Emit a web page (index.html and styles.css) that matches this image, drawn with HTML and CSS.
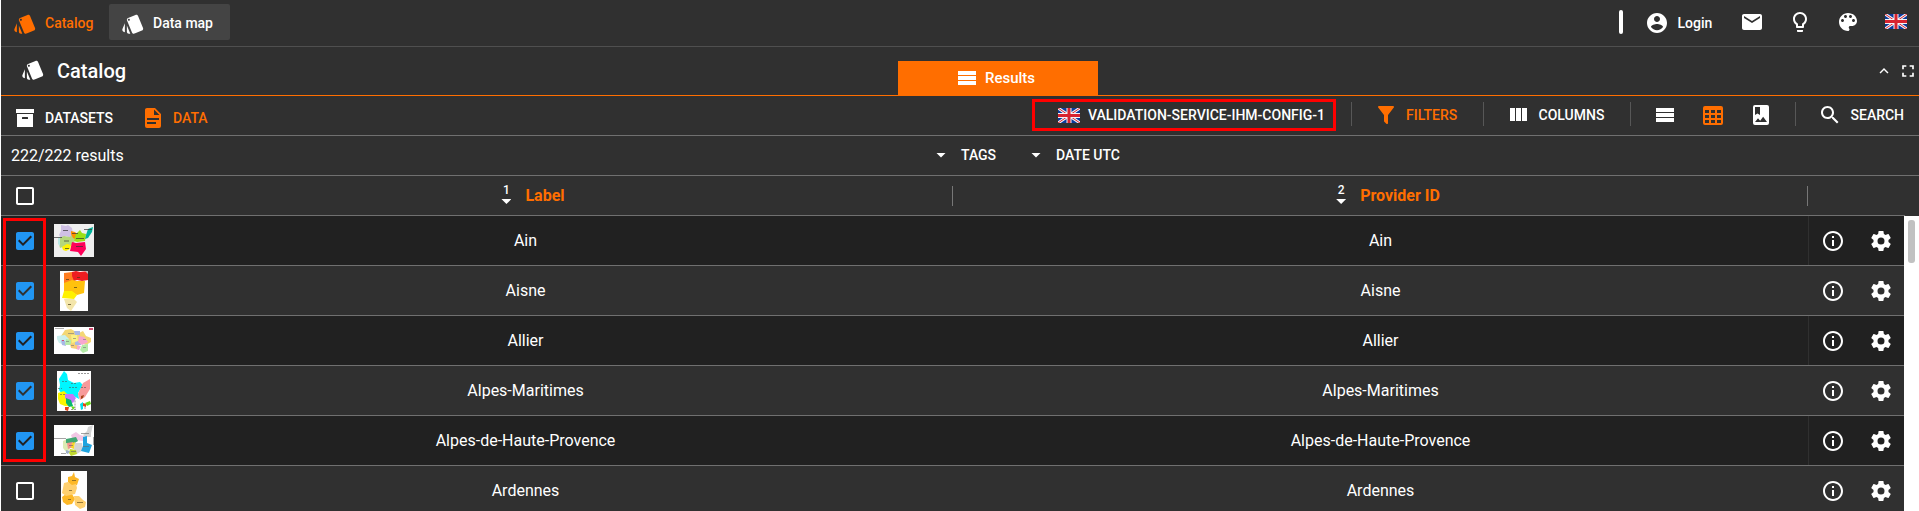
FILE: index.html
```html
<!DOCTYPE html>
<html lang="en">
<head>
<meta charset="utf-8">
<title>Catalog</title>
<link rel="stylesheet" href="styles.css">
</head>
<body>
<svg class="sprite" aria-hidden="true">
  <symbol id="cards" viewBox="0 0 24 24"><path d="M2.53 19.65l1.34.56v-9.03l-2.43 5.86c-.41 1.02.08 2.19 1.09 2.61zm19.5-3.7L17.07 3.98c-.31-.75-1.04-1.21-1.81-1.23-.26 0-.53.04-.79.15L7.1 5.95c-.75.31-1.21 1.03-1.23 1.8-.01.27.04.54.15.8l4.96 11.97c.31.76 1.05 1.22 1.83 1.23.26 0 .52-.05.77-.15l7.36-3.05c1.02-.42 1.51-1.59 1.09-2.6zM7.88 8.75c-.55 0-1-.45-1-1s.45-1 1-1 1 .45 1 1-.45 1-1 1zm-2 11c0 1.1.9 2 2 2h1.45l-3.45-8.34v6.34z"/></symbol>
  <symbol id="archive" viewBox="0 0 24 24"><path d="M3 3h18v4H3V3m1 5h16v13H4V8m5.500 3a.5.5 0 0 0-.5.5V13h6v-1.500a.5.5 0 0 0-.5-.5h-5z"/></symbol>
  <symbol id="doc" viewBox="0 0 24 24"><path d="M13 9h5.500L13 3.500V9M6 2h8l6 6v12a2 2 0 0 1-2 2H6a2 2 0 0 1-2-2V4c0-1.110.89-2 2-2m9 16v-2H6v2h9m3-4v-2H6v2h12z"/></symbol>
  <symbol id="bars" viewBox="0 0 24 24"><path d="M3 5h18v4H3zM3 10h18v4H3zM3 15h18v4H3z"/></symbol>
  <symbol id="filter" viewBox="0 0 24 24"><path d="M14 12v7.880c.04.3-.06.62-.29.83a.996.996 0 0 1-1.410 0l-2.010-2.010a.989.989 0 0 1-.29-.83V12h-.03L4.210 4.620a1 1 0 0 1 .17-1.400c.19-.14.4-.22.62-.22h14c.22 0 .43.08.62.22a1 1 0 0 1 .17 1.400L14.030 12H14z"/></symbol>
  <symbol id="columns" viewBox="0 0 24 24"><path d="M4 5h5v13H4zM10 5h5v13h-5zM16 5h5v13h-5z"/></symbol>
  <symbol id="table" viewBox="0 0 24 24"><path d="M4,3H20A2,2 0 0,1 22,5V20A2,2 0 0,1 20,22H4A2,2 0 0,1 2,20V5A2,2 0 0,1 4,3M4,7V10H8V7H4M10,7V10H14V7H10M20,10V7H16V10H20M4,12V15H8V12H4M4,20H8V17H4V20M10,12V15H14V12H10M10,20H14V17H10V20M20,20V17H16V20H20M20,12H16V15H20V12Z"/></symbol>
  <symbol id="album" viewBox="0 0 24 24"><path d="M6,19L9,15.14L11.14,17.72L14.14,13.86L18,19H6M6,4H11V12L8.5,10.5L6,12M18,2H6A2,2 0 0,0 4,4V20A2,2 0 0,0 6,22H18A2,2 0 0,0 20,20V4A2,2 0 0,0 18,2Z"/></symbol>
  <symbol id="search" viewBox="0 0 24 24"><path d="M15.5 14h-.79l-.28-.27C15.41 12.59 16 11.11 16 9.5 16 5.91 13.09 3 9.5 3S3 5.91 3 9.5 5.91 16 9.5 16c1.61 0 3.09-.59 4.23-1.57l.27.28v.79l5 4.99L20.49 19l-4.99-5zm-6 0C7.01 14 5 11.99 5 9.5S7.01 5 9.5 5 14 7.010 14 9.5 11.990 14 9.5 14z"/></symbol>
  <symbol id="account" viewBox="0 0 24 24"><path d="M12 2C6.48 2 2 6.48 2 12s4.48 10 10 10 10-4.480 10-10S17.520 2 12 2zm0 3c1.660 0 3 1.340 3 3s-1.340 3-3 3-3-1.340-3-3 1.340-3 3-3zm0 14.200c-2.500 0-4.710-1.280-6-3.220.03-1.990 4-3.080 6-3.080 1.990 0 5.970 1.090 6 3.080-1.290 1.940-3.500 3.220-6 3.220z"/></symbol>
  <symbol id="mail" viewBox="0 0 24 24"><path d="M20 4H4c-1.100 0-1.990.9-1.990 2L2 18c0 1.100.9 2 2 2h16c1.100 0 2-.9 2-2V6c0-1.100-.9-2-2-2zm0 4l-8 5-8-5V6l8 5 8-5v2z"/></symbol>
  <symbol id="bulb" viewBox="0 0 24 24"><path d="M9 21c0 .55.45 1 1 1h4c.55 0 1-.45 1-1v-1H9v1zm3-19C8.140 2 5 5.140 5 9c0 2.380 1.190 4.470 3 5.740V17c0 .55.45 1 1 1h6c.55 0 1-.45 1-1v-2.260c1.810-1.270 3-3.360 3-5.740 0-3.860-3.140-7-7-7zm2.850 11.100l-.85.6V16h-4v-2.300l-.85-.6C7.800 12.160 7 10.630 7 9c0-2.760 2.240-5 5-5s5 2.240 5 5c0 1.630-.8 3.160-2.150 4.100z"/></symbol>
  <symbol id="palette" viewBox="0 0 24 24"><path d="M12 3c-4.970 0-9 4.030-9 9s4.030 9 9 9c.83 0 1.500-.67 1.500-1.500 0-.39-.15-.74-.39-1.010-.23-.26-.38-.61-.38-.99 0-.83.67-1.500 1.500-1.500H16c2.760 0 5-2.240 5-5 0-4.420-4.030-8-9-8zm-5.500 9c-.83 0-1.500-.67-1.500-1.500S5.670 9 6.500 9 8 9.670 8 10.500 7.330 12 6.500 12zm3-4C8.670 8 8 7.330 8 6.500S8.670 5 9.500 5s1.500.67 1.500 1.500S10.330 8 9.500 8zm5 0c-.83 0-1.500-.67-1.500-1.500S13.670 5 14.500 5s1.500.67 1.500 1.500S15.330 8 14.500 8zm3 4c-.83 0-1.500-.67-1.500-1.500S16.670 9 17.500 9s1.500.67 1.500 1.500-.67 1.500-1.500 1.500z"/></symbol>
  <symbol id="up" viewBox="0 0 24 24"><path d="M12 8l-6 6 1.410 1.410L12 10.830l4.590 4.580L18 14z"/></symbol>
  <symbol id="full" viewBox="0 0 24 24"><path d="M7 14H5v5h5v-2H7v-3zm-2-4h2V7h3V5H5v5zm12 7h-3v2h5v-5h-2v3zM14 5v2h3v3h2V5h-5z"/></symbol>
  <symbol id="info" viewBox="0 0 24 24"><path d="M11 17h2v-6h-2v6zm1-15C6.480 2 2 6.480 2 12s4.480 10 10 10 10-4.480 10-10S17.520 2 12 2zm0 18c-4.410 0-8-3.590-8-8s3.590-8 8-8 8 3.590 8 8-3.590 8-8 8zM11 9h2V7h-2v2z"/></symbol>
  <symbol id="gear" viewBox="0 0 24 24"><path d="M12,15.5A3.5,3.5 0 0,1 8.5,12A3.5,3.5 0 0,1 12,8.5A3.5,3.5 0 0,1 15.5,12A3.5,3.5 0 0,1 12,15.5M19.43,12.97C19.47,12.65 19.5,12.33 19.5,12C19.5,11.67 19.47,11.34 19.43,11L21.54,9.37C21.73,9.22 21.78,8.95 21.66,8.73L19.66,5.27C19.54,5.05 19.27,4.96 19.05,5.05L16.56,6.05C16.04,5.66 15.5,5.32 14.87,5.07L14.5,2.42C14.46,2.18 14.25,2 14,2H10C9.75,2 9.54,2.18 9.5,2.42L9.13,5.07C8.5,5.32 7.96,5.66 7.44,6.05L4.95,5.05C4.73,4.96 4.46,5.05 4.34,5.27L2.34,8.73C2.21,8.95 2.27,9.22 2.46,9.37L4.57,11C4.53,11.34 4.5,11.67 4.5,12C4.5,12.33 4.53,12.65 4.57,12.97L2.46,14.63C2.27,14.78 2.21,15.05 2.34,15.27L4.34,18.73C4.46,18.95 4.73,19.03 4.95,18.95L7.44,17.94C7.96,18.34 8.5,18.68 9.13,18.93L9.5,21.58C9.54,21.82 9.75,22 10,22H14C14.25,22 14.46,21.82 14.5,21.58L14.87,18.93C15.5,18.67 16.04,18.34 16.56,17.94L19.05,18.95C19.27,19.03 19.54,18.95 19.66,18.73L21.66,15.27C21.78,15.05 21.73,14.78 21.54,14.63L19.43,12.97Z"/></symbol>
  <symbol id="box" viewBox="0 0 24 24"><path d="M19 5v14H5V5h14m0-2H5c-1.100 0-2 .9-2 2v14c0 1.100.9 2 2 2h14c1.100 0 2-.9 2-2V5c0-1.100-.9-2-2-2z"/></symbol>
  <symbol id="checked" viewBox="0 0 24 24"><path d="M19 3H5c-1.110 0-2 .9-2 2v14c0 1.100.89 2 2 2h14c1.110 0 2-.9 2-2V5c0-1.100-.89-2-2-2zm-9 14l-5-5 1.410-1.410L10 14.170l7.590-7.590L19 8l-9 9z"/></symbol>
  <symbol id="flag" viewBox="0 0 22 15"><path fill="#0b3a9b" d="M0 0h22v15H0z"/><path stroke="#f4f4f8" stroke-width="3" d="M0 0l22 15M22 0L0 15"/><path stroke="#d8232f" stroke-width="1" d="M0 0l22 15M22 0L0 15"/><path fill="#f4f4f8" d="M8.500 0h5v15h-5zM0 5h22v5H0z"/><path fill="#d8232f" d="M9.500 0h3v15h-3zM0 6h22v3H0z"/></symbol>
</svg>

<div class="app">
  <header class="topbar">
    <a class="nav nav-active"><svg class="icon"><use href="#cards"/></svg><span>Catalog</span></a>
    <a class="nav nav-raised"><svg class="icon"><use href="#cards"/></svg><span>Data map</span></a>
    <div class="top-tools">
      <i class="grip"></i>
      <a class="login"><svg class="icon"><use href="#account"/></svg><span>Login</span></a>
      <svg class="icon"><use href="#mail"/></svg>
      <svg class="icon"><use href="#bulb"/></svg>
      <svg class="icon"><use href="#palette"/></svg>
      <svg class="flag"><use href="#flag"/></svg>
    </div>
  </header>

  <div class="titlebar">
    <svg class="icon"><use href="#cards"/></svg>
    <h1 class="title">Catalog</h1>
    <div class="tab"><svg class="icon"><use href="#bars"/></svg><span>Results</span></div>
    <div class="window-tools">
      <svg class="icon-up"><use href="#up"/></svg>
      <svg class="icon-full"><use href="#full"/></svg>
    </div>
  </div>

  <div class="toolbar">
    <div class="modes">
      <a class="mode"><svg class="icon"><use href="#archive"/></svg><span>DATASETS</span></a>
      <a class="mode accent"><svg class="icon"><use href="#doc"/></svg><span>DATA</span></a>
    </div>
    <div class="options">
      <div class="service"><svg class="flag"><use href="#flag"/></svg><span>VALIDATION-SERVICE-IHM-CONFIG-1</span></div>
      <i class="sep sep-first"></i>
      <a class="opt opt-filters accent"><svg class="icon"><use href="#filter"/></svg><span>FILTERS</span></a>
      <i class="sep"></i>
      <a class="opt opt-columns"><svg class="icon"><use href="#columns"/></svg><span>COLUMNS</span></a>
      <i class="sep"></i>
      <div class="views">
        <svg class="icon"><use href="#bars"/></svg>
        <svg class="icon accent"><use href="#table"/></svg>
        <svg class="icon"><use href="#album"/></svg>
      </div>
      <i class="sep"></i>
      <a class="opt opt-search"><svg class="icon"><use href="#search"/></svg><span>SEARCH</span></a>
    </div>
  </div>

  <div class="summary">
    <span class="count">222/222 results</span>
    <span class="drop drop-tags"><i class="caret"></i>TAGS</span>
    <span class="drop drop-date"><i class="caret"></i>DATE UTC</span>
  </div>

  <div class="grid head">
    <div class="cell-check"><svg class="icon"><use href="#box"/></svg></div>
    <div></div>
    <div class="cell-head"><span class="order"><b>1</b><i class="caret"></i></span><span class="head-name">Label</span></div>
    <div class="cell-head"><span class="order"><b>2</b><i class="caret"></i></span><span class="head-name">Provider ID</span></div>
  </div>

  <div class="body">
    <div class="rows">
      <div class="grid row">
        <div class="cell-check on"><svg class="icon"><use href="#checked"/></svg></div>
        <div class="cell-thumb"><svg width="40" height="33"><path fill="#efefef" d="M0 0h40v33H0z"/><path fill="#cfc0e4" d="M7 1l5 1 2-1 4 3 1 6-2 4-5-2-5 2-2-3 2-4z"/><path fill="#b5d77c" d="M5 14l5-2 6 1 3-4 2 5-1 6-4 2-2-1-8 3-1-4z"/><path fill="#b9e8e4" d="M4 14l2-1v9l-2-2z"/><path fill="#ff9000" d="M17 7l4 1 2 2-2 5-2-1-2-4z"/><path fill="#9be016" d="M22 10l4-4 2 3 4 1-1 7-8 1-3-1z"/><path fill="#00b39b" d="M32 11l2-6 5-2-1 5-4 6-3 1z"/><path fill="#ff0058" d="M18 18l4 1 9-1 1 7-5 7-3-4-8-1z"/><path fill="#fff200" d="M8 23l5-3 4 1-1 4-4 2-3-1z"/><path stroke="#333" stroke-width=".7" d="M9 6.500h5M18 9.500h6M22 14.500h8M10 17h5M11 24.500h4M22 22.500h7M30 5.500h8M0 13.500h8"/></svg></div>
        <div class="cell-text">Ain</div><div class="cell-text">Ain</div>
        <div class="cell-actions"><svg class="icon"><use href="#info"/></svg><svg class="icon"><use href="#gear"/></svg></div>
      </div>
      <div class="grid row">
        <div class="cell-check on"><svg class="icon"><use href="#checked"/></svg></div>
        <div class="cell-thumb"><svg width="28" height="40"><path fill="#fff" d="M0 0h28v40H0z"/><path fill="#ff7d20" d="M4 2l8-1 2 3v6l-4 3-6-1z"/><path fill="#ed1d21" d="M12 1l4-1 4 1 8-1v9l-6 1-5-1-3 1-2-5z"/><path fill="#ffc20e" d="M4 12l8-3 5 1 8 0-1 12-7 2-5-3-8-1z"/><path fill="#fff100" d="M4 20l8 0 5 4-3 4-12-1z"/><path fill="#f3e5aa" d="M4 28l10 0 3 3-6 9-4-3z"/><path fill="#bbb" d="M25 0h3v3z"/><path stroke="#4a3b18" stroke-width=".7" d="M14 16.500h3M6 8.500h3M17 6.500h3M8 33.500h3"/></svg></div>
        <div class="cell-text">Aisne</div><div class="cell-text">Aisne</div>
        <div class="cell-actions"><svg class="icon"><use href="#info"/></svg><svg class="icon"><use href="#gear"/></svg></div>
      </div>
      <div class="grid row">
        <div class="cell-check on"><svg class="icon"><use href="#checked"/></svg></div>
        <div class="cell-thumb"><svg width="40" height="27"><path fill="#fff" d="M0 0h40v27H0z"/><path fill="#f4d775" d="M11 3l6-1 5 3 3 1 4-2 3 5 5 2v4l-5 3-5-2-4 4-5-1-6-6-5-4z"/><path fill="#c9efee" d="M3 9l8-1 4 4-3 6-7-2-2-4z"/><path fill="#a9b8e6" d="M20 4h6v4h-5zM7 13l4 1 1 5-4-1zM21 14h6v4h-6z"/><path fill="#fbf184" d="M17 8l6 0 1 6-6 2z"/><path fill="#f7a7cf" d="M25 9l5 1 4 5-6 3-4-3zM22 18l5 1-2 4-3-1z"/><path fill="#b5eba8" d="M12 12l5 1v5h-6zM28 18l6-1v7l-5 2-3-3z"/><path fill="#f6cb77" d="M16 17l7 1v4l-6-1z"/><path fill="#d14d72" d="M35 1h4v2h-4zM8 13h2v1H8z"/><path stroke="#777" stroke-width=".6" d="M1 1.500h9M14 6.500h6M19 11.500h3M12 14.500h3M29 12.500h3M17 18.500h3M29 20.500h3"/></svg></div>
        <div class="cell-text">Allier</div><div class="cell-text">Allier</div>
        <div class="cell-actions"><svg class="icon"><use href="#info"/></svg><svg class="icon"><use href="#gear"/></svg></div>
      </div>
      <div class="grid row">
        <div class="cell-check on"><svg class="icon"><use href="#checked"/></svg></div>
        <div class="cell-thumb"><svg width="34" height="40"><path fill="#fff" d="M0 0h34v40H0z"/><path fill="#00f6ff" d="M7 0l3 3 1 6 6 3 6-1 3 3-5 8 1 6-9-5-8 0-3-4 1-5-1-6z"/><path fill="#f79a9a" d="M26 12l7-4v10l-5 8-5 3-2-6z"/><path fill="#fbf500" d="M1 22l6-2 4 4-1 8 2 3-4 0-5-2-2-5z"/><path fill="#c479f7" d="M8 23l8 0 3 4-3 5-5-2-3-3z"/><path fill="#08b76c" d="M9 27l5 2 2 6-4 1-3-4z"/><path fill="#e44216" d="M8 36h4l-1 4-3-1zM26 32l3 1v3l-3-1z"/><path fill="#68d917" d="M28 32l5-2 1 3-4 2zM14 35l4 1-2 3z"/><path fill="#00dfe8" d="M23 33l3-2v7l-2 1z"/><path fill="#a54418" d="M24 25l3-1-1 3-2 1z"/><path stroke="#555" stroke-width=".6" stroke-dasharray="2 1" d="M5 10.500h5M14 12.500h6M12 16.500h9M1 17.500h4M3 23.500h5M24 16.500h5M21 2.500h11M18 29.500v8M14 38.500h6M28 36v3"/></svg></div>
        <div class="cell-text">Alpes-Maritimes</div><div class="cell-text">Alpes-Maritimes</div>
        <div class="cell-actions"><svg class="icon"><use href="#info"/></svg><svg class="icon"><use href="#gear"/></svg></div>
      </div>
      <div class="grid row">
        <div class="cell-check on"><svg class="icon"><use href="#checked"/></svg></div>
        <div class="cell-thumb"><svg width="40" height="31"><path fill="#fff" d="M0 0h40v31H0z"/><path fill="#d5d5d5" d="M29 10l4-4 1-4 5-2-2 8 0 4-6 0zM21 18l7 0 1 7-6 4-3-5z"/><path fill="#f3c7e5" d="M17 10l5-3 4 3 4 1-1 5-7-1-4-2z"/><path fill="#1fa4df" d="M29 12l4-1v7l5 2-3 8-8-2 2-5z"/><path fill="#dcebb3" d="M9 16l4-2 3 10-4 3-3-4z"/><path fill="#43a874" d="M12 14l10-2 2 4-5 3-7-1z"/><path fill="#f3938c" d="M13 18l6-1v5l-5 2z"/><path fill="#f6d72c" d="M18 18l3-1-1 7-3-1z"/><path fill="#c0d82e" d="M16 24l6 1 1 4-6 2-2-3z"/><path fill="#9eb0c8" d="M12 25l4 1-2 3-2-1z"/><path stroke="#666" stroke-width=".6" d="M0 13.500h12M27 8.500h8M29 21.500h6M15 20.500h4M17 26.500h5M7 28.500h5M39.500 12v8"/></svg></div>
        <div class="cell-text">Alpes-de-Haute-Provence</div><div class="cell-text">Alpes-de-Haute-Provence</div>
        <div class="cell-actions"><svg class="icon"><use href="#info"/></svg><svg class="icon"><use href="#gear"/></svg></div>
      </div>
      <div class="grid row">
        <div class="cell-check"><svg class="icon"><use href="#box"/></svg></div>
        <div class="cell-thumb"><svg width="26" height="40"><path fill="#fff" d="M0 0h26v40H0z"/><path fill="#fdb827" d="M7 6l4-1 2-4 1 5 4 2-2 6-6 1-3-4zM1 26l4-3 6 0 3 5-3 5-5 1-4-3z"/><path fill="#ffd06f" d="M3 12l4-1 4 3 4-1 1 4-2 6-9 2-4-3zM13 25l5 0 4 4 3 2-1 5-5 2-5-4z"/><path stroke="#6d5521" stroke-width=".7" d="M11 9.500h4M8 19.500h3M7 28.500h3M16 31.500h6"/></svg></div>
        <div class="cell-text">Ardennes</div><div class="cell-text">Ardennes</div>
        <div class="cell-actions"><svg class="icon"><use href="#info"/></svg><svg class="icon"><use href="#gear"/></svg></div>
      </div>
    </div>
    <div class="scroll"><i class="thumb"></i></div>
    <div class="mark-selection"></div>
  </div>
</div>
</body>
</html>
```
FILE: styles.css
```css
* { box-sizing: border-box; }

body {
  margin: 0;
  background: #fff;
  color: #fff;
  font: 500 14px/20px Roboto, sans-serif;
  overflow: hidden;
}

.sprite { position: absolute; width: 0; height: 0; }

.icon {
  width: 24px;
  height: 24px;
  flex: none;
  display: block;
  fill: currentColor;
}

.flag { width: 22px; height: 15px; flex: none; }

.accent { color: #ff6e00; }

.app {
  margin-left: 1px;
  height: 511px;
  display: flex;
  flex-direction: column;
  background: #303030;
  overflow: hidden;
}

/* top navigation */
.topbar {
  flex: none;
  height: 47px;
  display: flex;
  align-items: flex-start;
  border-bottom: 1px solid #4f4f4f;
}

.nav {
  height: 36px;
  margin-top: 4px;
  padding: 4px 16px 0 12px;
  display: flex;
  align-items: center;
  gap: 8px;
}

.nav span { margin-bottom: 2px; }
.nav-active { width: 108px; color: #ff6e00; }
.nav-raised { width: 121px; background: #444; border-radius: 2px; }

.top-tools {
  margin-left: auto;
  padding: 10px 12px 0 0;
  display: flex;
}

.grip { width: 4px; height: 24px; margin-right: 22px; background: #fff; border-radius: 2px; }
.login { width: 95px; height: 26px; display: flex; align-items: center; gap: 8.5px; }
.top-tools > .icon { margin-right: 24px; }
.top-tools > .flag { margin: 4px 0 0 1px; }

/* module title */
.titlebar {
  flex: none;
  height: 49px;
  display: flex;
  border-bottom: 1px solid #ff6e00;
}

.titlebar > .icon { margin: 11px 0 0 20px; }

.title {
  width: 840px;
  margin: 11px 0 0 12px;
  font: 500 20px/26px Roboto, sans-serif;
}

.tab {
  width: 200px;
  margin: 14px 0 0 1px;
  padding: 5px 0 0 57px;
  display: flex;
  gap: 6px;
  background: #ff6e00;
  font-size: 15px;
}

.tab span { margin-top: 2px; }

.window-tools {
  margin-left: auto;
  padding-right: 1px;
  display: flex;
}

.icon-up { width: 18px; height: 18px; margin: 15px 5px 0 0; fill: #fff; }
.icon-full { width: 20px; height: 20px; margin-top: 14px; fill: #fff; }

/* toolbar */
.toolbar {
  flex: none;
  height: 40px;
  display: flex;
  justify-content: space-between;
  border-bottom: 1px solid #707070;
}

.modes { display: flex; padding: 10px 0 0 12px; }
.mode { display: flex; gap: 8px; height: 24px; align-items: center; }
.mode:first-child { width: 128px; }

.options { display: flex; padding: 3px 15px 0 0; align-items: flex-start; }

.service {
  width: 304px;
  height: 32px;
  padding-left: 23px;
  display: flex;
  align-items: center;
  gap: 8px;
  border: 3px solid #f00;
  white-space: nowrap;
}

.sep { width: 1px; height: 24px; margin-top: 3px; background: #575757; }
.sep-first { margin-left: 15px; }

.opt { height: 24px; margin-top: 4px; display: flex; align-items: center; gap: 8px; }
.opt-filters { width: 131px; padding-left: 22px; }
.opt-columns { width: 146px; padding-left: 22px; gap: 8.5px; }
.opt-search { width: 108px; padding-left: 22px; gap: 8.500px; }
.views { width: 164px; margin-top: 4px; padding-left: 22px; display: flex; gap: 24px; }

/* result summary */
.summary {
  flex: none;
  height: 40px;
  padding: 9px 0 0 10px;
  display: flex;
  border-bottom: 1px solid #707070;
}

.count { width: 925px; margin-top: 1px; font-size: 16px; font-weight: 400; }
.drop { height: 20px; display: flex; align-items: center; gap: 15px; }
.drop-tags { width: 95px; }

.caret {
  width: 10px;
  height: 5px;
  background: #fff;
  clip-path: polygon(0 0, 100% 0, 50% 100%);
}

/* table */
.grid { display: grid; grid-template-columns: 44px 53px 855px 855px 97px; }

.head { flex: none; height: 40px; border-bottom: 1px solid #707070; width: 1904px; }
.head .cell-check { padding-top: 8px; }

.cell-check { padding-left: 12px; }
.on { color: #2196f3; }

.cell-head {
  display: flex;
  justify-content: center;
  align-items: center;
  gap: 14px;
  padding-left: 16px;
  border-right: 1px solid #777;
  height: 20px;
  margin-top: 10px;
}

.order { display: flex; flex-direction: column; align-items: center; height: 20px; }
.order b { font: 500 12px/13px Roboto, sans-serif; margin-top: -2px; height: 15px; }
.head-name { font-size: 16px; font-weight: 700; color: #ff6e00; }

.body { flex: 1; display: flex; position: relative; }
.rows { width: 1904px; height: 295px; overflow: hidden; }

.row {
  height: 50px;
  background: #303030;
  border-bottom: 1px solid #707070;
  font-size: 16px;
  font-weight: 400;
}

.row:nth-child(odd) { background: #212121; }
.row > .cell-check { padding-top: 13px; }
.cell-thumb { width: 58px; display: flex; align-items: center; justify-content: center; }
.cell-thumb svg { flex: none; }
.cell-text { text-align: center; padding-top: 15px; }

.cell-actions {
  display: flex;
  gap: 24px;
  padding: 13px 0 0 12px;
  border-left: 1px solid #303030;
}

.scroll { flex: 1; background: #fff; padding: 4px; }
.thumb { display: block; width: 7px; height: 43px; border-radius: 3px; background: #c1c1c1; }

/* outline drawn over the selected checkboxes */
.mark-selection {
  position: absolute;
  left: 2px;
  top: 2px;
  width: 43px;
  height: 244px;
  border: 3px solid #f00;
}
```
